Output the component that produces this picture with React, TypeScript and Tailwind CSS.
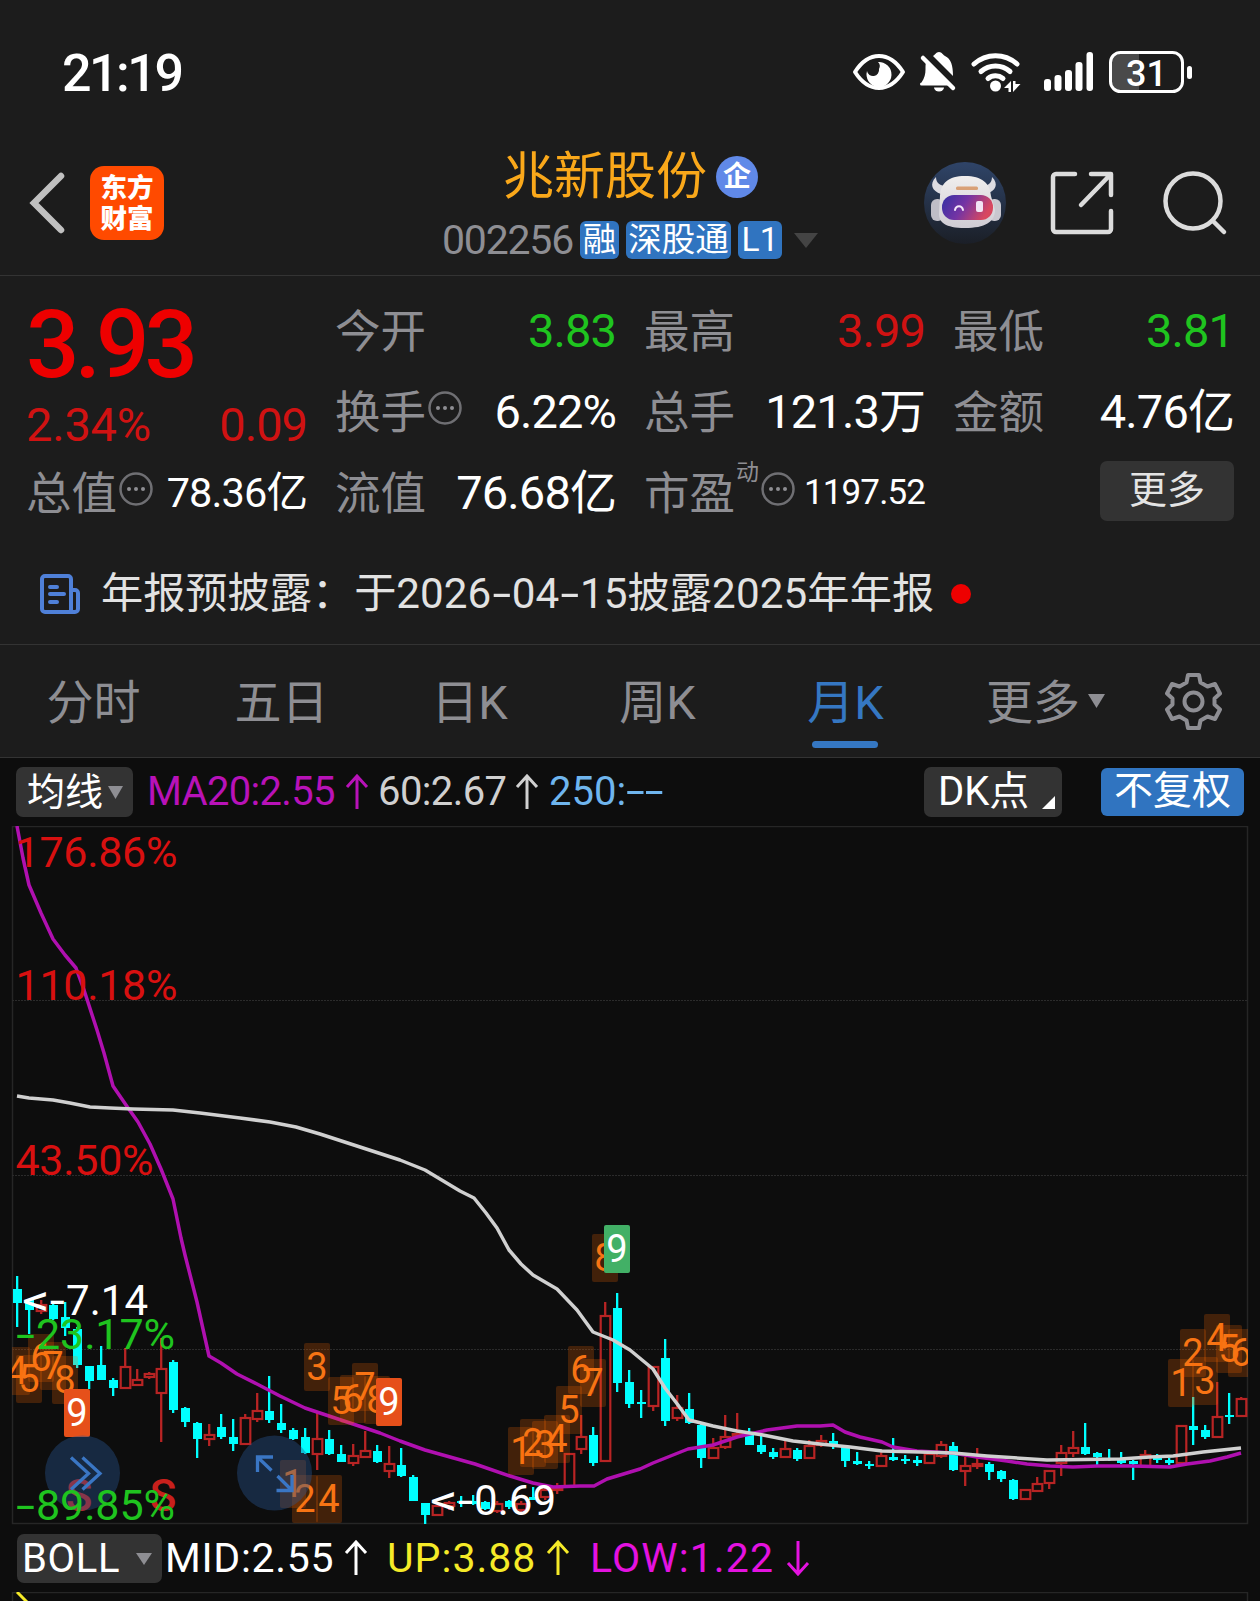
import { clsx } from "clsx";

type Candle = ["u" | "d", number, number, number, number];

// direction, high, body top, body bottom, low
const candles: Candle[] = [
  ["d", 1276, 1289, 1303, 1327],
  ["d", 1300, 1300, 1310, 1334],
  ["u", 1300, 1304, 1312, 1314],
  ["d", 1303, 1305, 1319, 1320],
  ["d", 1302, 1317, 1328, 1336],
  ["d", 1327, 1329, 1365, 1368],
  ["d", 1366, 1366, 1381, 1389],
  ["d", 1346, 1365, 1380, 1380],
  ["d", 1378, 1380, 1388, 1396],
  ["u", 1348, 1366, 1389, 1389],
  ["u", 1369, 1379, 1386, 1386],
  ["u", 1372, 1373, 1378, 1379],
  ["u", 1338, 1368, 1394, 1442],
  ["d", 1360, 1362, 1410, 1413],
  ["d", 1407, 1408, 1422, 1427],
  ["d", 1422, 1423, 1439, 1458],
  ["u", 1424, 1434, 1440, 1446],
  ["d", 1414, 1427, 1437, 1439],
  ["d", 1419, 1437, 1444, 1451],
  ["u", 1414, 1417, 1445, 1445],
  ["u", 1393, 1410, 1420, 1422],
  ["d", 1376, 1411, 1420, 1423],
  ["d", 1404, 1423, 1430, 1433],
  ["d", 1428, 1430, 1439, 1440],
  ["d", 1428, 1437, 1453, 1454],
  ["u", 1413, 1438, 1455, 1470],
  ["d", 1430, 1439, 1454, 1455],
  ["d", 1445, 1454, 1462, 1462],
  ["u", 1444, 1455, 1464, 1466],
  ["u", 1431, 1450, 1458, 1458],
  ["d", 1445, 1451, 1462, 1463],
  ["u", 1446, 1463, 1472, 1478],
  ["d", 1448, 1465, 1476, 1477],
  ["d", 1475, 1477, 1501, 1501],
  ["d", 1503, 1503, 1515, 1524],
  ["u", 1505, 1505, 1516, 1516],
  ["u", 1501, 1502, 1507, 1510],
  ["d", 1496, 1501, 1503, 1507],
  ["d", 1495, 1501, 1504, 1505],
  ["d", 1501, 1502, 1509, 1510],
  ["u", 1501, 1503, 1512, 1513],
  ["d", 1500, 1501, 1507, 1509],
  ["u", 1501, 1503, 1511, 1513],
  ["d", 1487, 1497, 1500, 1500],
  ["u", 1487, 1489, 1498, 1500],
  ["u", 1483, 1487, 1491, 1494],
  ["u", 1453, 1453, 1487, 1487],
  ["u", 1415, 1436, 1450, 1454],
  ["d", 1427, 1435, 1463, 1466],
  ["u", 1302, 1315, 1462, 1462],
  ["d", 1293, 1308, 1383, 1392],
  ["d", 1370, 1382, 1404, 1408],
  ["d", 1390, 1402, 1404, 1418],
  ["u", 1366, 1366, 1407, 1411],
  ["d", 1339, 1358, 1421, 1426],
  ["u", 1395, 1407, 1419, 1421],
  ["d", 1393, 1409, 1423, 1424],
  ["d", 1424, 1425, 1458, 1468],
  ["u", 1438, 1447, 1459, 1459],
  ["u", 1415, 1436, 1448, 1449],
  ["u", 1413, 1433, 1437, 1438],
  ["d", 1428, 1435, 1445, 1445],
  ["d", 1433, 1445, 1452, 1454],
  ["d", 1448, 1452, 1457, 1459],
  ["u", 1438, 1448, 1458, 1458],
  ["d", 1448, 1450, 1459, 1461],
  ["u", 1440, 1445, 1459, 1459],
  ["u", 1435, 1440, 1446, 1447],
  ["d", 1433, 1441, 1445, 1449],
  ["d", 1447, 1447, 1461, 1467],
  ["d", 1452, 1461, 1464, 1465],
  ["d", 1461, 1464, 1466, 1469],
  ["u", 1452, 1455, 1467, 1467],
  ["d", 1438, 1457, 1460, 1461],
  ["d", 1455, 1459, 1461, 1464],
  ["d", 1456, 1460, 1463, 1466],
  ["u", 1453, 1453, 1464, 1464],
  ["u", 1441, 1444, 1457, 1458],
  ["d", 1442, 1446, 1470, 1471],
  ["u", 1457, 1465, 1472, 1486],
  ["u", 1448, 1463, 1467, 1469],
  ["d", 1462, 1464, 1472, 1480],
  ["d", 1470, 1471, 1479, 1482],
  ["d", 1479, 1480, 1499, 1500],
  ["u", 1489, 1489, 1500, 1500],
  ["u", 1477, 1483, 1492, 1492],
  ["u", 1470, 1470, 1484, 1489],
  ["u", 1445, 1452, 1464, 1476],
  ["u", 1431, 1447, 1454, 1457],
  ["d", 1423, 1447, 1454, 1455],
  ["d", 1452, 1453, 1457, 1467],
  ["d", 1449, 1458, 1460, 1461],
  ["d", 1452, 1460, 1463, 1464],
  ["d", 1460, 1461, 1464, 1480],
  ["u", 1450, 1454, 1467, 1467],
  ["d", 1454, 1458, 1460, 1463],
  ["d", 1458, 1460, 1463, 1465],
  ["u", 1425, 1425, 1464, 1464],
  ["d", 1397, 1426, 1430, 1445],
  ["d", 1425, 1430, 1437, 1439],
  ["u", 1382, 1416, 1438, 1438],
  ["d", 1393, 1415, 1417, 1424],
  ["u", 1397, 1398, 1417, 1417],
];

const ma20 =
  "17,826 23,858 29,885 41,913 53,939 65,955 76,968 84,990 97,1030 104,1053 113,1086 126,1105 138,1122 150,1144 161,1169 173,1199 181,1238 185,1255 197,1302 209,1356 221,1363 237,1374 257,1384 280,1396 305,1408 323,1414 353,1424 380,1433 400,1441 425,1450 475,1464 510,1476 533,1483 553,1487 580,1486 594,1486 607,1479 640,1469 653,1463 688,1449 713,1445 737,1437 767,1430 797,1426 820,1426 833,1425 845,1432 860,1437 882,1442 893,1447 917,1451 953,1453 977,1457 1007,1461 1027,1464 1050,1466 1073,1467 1097,1466 1133,1466 1170,1467 1187,1464 1210,1461 1227,1457 1241,1453";

const ma60 =
  "17,1096 29,1098 53,1100 70,1103 90,1107 110,1108 133,1109 173,1110 200,1113 240,1118 270,1122 296,1127 320,1134 360,1147 400,1160 425,1170 440,1179 460,1191 474,1198 486,1213 497,1228 509,1250 521,1264 533,1275 557,1289 577,1310 593,1332 613,1340 630,1350 653,1369 665,1388 678,1405 689,1420 713,1426 737,1431 763,1435 793,1441 820,1444 850,1447 882,1451 920,1452 953,1453 987,1456 1047,1460 1120,1459 1150,1457 1173,1456 1203,1452 1241,1448";

// sequence counters: digit, centre x, top y
const counters: [string, number, number][] = [
  ["4", 17, 1347],
  ["5", 29, 1355],
  ["6", 41, 1334],
  ["7", 53, 1342],
  ["8", 65, 1356],
  ["3", 317, 1343],
  ["5", 341, 1377],
  ["6", 353, 1375],
  ["7", 365, 1363],
  ["8", 377, 1376],
  ["1", 293, 1460],
  ["2", 305, 1475],
  ["4", 329, 1475],
  ["1", 521, 1427],
  ["2", 533, 1419],
  ["3", 545, 1421],
  ["4", 557, 1415],
  ["5", 569, 1386],
  ["6", 581, 1346],
  ["7", 593, 1359],
  ["8", 605, 1234],
  ["1", 1181, 1359],
  ["2", 1193, 1329],
  ["3", 1205, 1357],
  ["4", 1217, 1314],
  ["5", 1229, 1325],
  ["6", 1241, 1329],
];

const nines: [number, number, string][] = [
  [77, 1389, "#e6501a"],
  [389, 1378, "#e6501a"],
  [617, 1225, "#42b066"],
];

const axis: [string, number, number, string][] = [
  ["176.86%", 867, 162, "#d81010"],
  ["110.18%", 1000, 162, "#d81010"],
  ["43.50%", 1175, 138, "#d81010"],
];

const axisDown: [string, number][] = [
  ["23.17%", 1349],
  ["89.85%", 1520],
];

function StatusBar() {
  return (
    <div className="flex h-[144px] items-center justify-between pl-[62px] pr-[67px]">
      <span className="pt-[4px] text-[52px] font-medium leading-none tracking-[-2.500px] text-white">21:19</span>
      <svg width="342" height="44" viewBox="851 50 342 44" fill="none">
        {/* eye */}
        <path d="M855 72C862 61 870 56 879 56s17 5 24 16c-7 11-15 16-24 16s-17-5-24-16Z" stroke="#fff" strokeWidth="4" strokeLinejoin="round" />
        <path d="M878 62a12.500 12.500 0 1 1-11 9a6 6 0 0 0 12-2a6 6 0 0 0-1-7Z" fill="#fff" />
        {/* muted bell */}
        <path d="M926 62 951 85.500H921.500a1.500 1.500 0 0 1 0-3c3-4 4-9 4-13 0-3 0-5 .500-7.500Z" fill="#fff" />
        <path d="M933 56c2-1 3-4 6-4s4 3 6 4c6 3 8 9 8 20Z" fill="#fff" />
        <path d="m923 58 30 30" stroke="#fff" strokeWidth="4.500" strokeLinecap="round" />
        <path d="M934 87.500h10a5 4 0 0 1-10 0Z" fill="#fff" />
        {/* wifi */}
        <g stroke="#fff" strokeWidth="5" strokeLinecap="round">
          <path d="M974 64a32 32 0 0 1 43 0" />
          <path d="M981 71.500a22 22 0 0 1 29 0" />
          <path d="M988 78.500a12 12 0 0 1 15 0" />
        </g>
        <circle cx="995.500" cy="86" r="5.500" fill="#fff" />
        <path d="M1011 81v11h-2.500v-4H1004ZM1013 92V81h2.500v3h5Z" fill="#fff" />
        {/* signal */}
        <g fill="#fff">
          <rect x="1044" y="79" width="7" height="12" rx="3" />
          <rect x="1054.500" y="75" width="7" height="16" rx="3" />
          <rect x="1065" y="70" width="7" height="21" rx="3" />
          <rect x="1075.500" y="62" width="7" height="29" rx="3" />
          <rect x="1086.500" y="52" width="6.500" height="39" rx="3" />
        </g>
        {/* battery */}
        <path d="M1119 54h20v36h-20a8 8 0 0 1-8-8V62a8 8 0 0 1 8-8Z" fill="#4a4a4a" />
        <rect x="1110.500" y="52.500" width="72" height="39" rx="10" stroke="#fff" strokeWidth="3" />
        <rect x="1187" y="66" width="5" height="13" rx="2.500" fill="#fff" />
        <text x="1126" y="85.500" fill="#fff" className="text-[36px] font-medium">31</text>
      </svg>
    </div>
  );
}

function Robot() {
  return (
    <svg width="82" height="82" viewBox="0 0 82 82">
      <defs>
        <linearGradient id="halo" x1="0" y1="0" x2="0" y2="1">
          <stop offset="0" stopColor="#2f4468" />
          <stop offset="1" stopColor="#1b1f27" />
        </linearGradient>
        <linearGradient id="visor" x1="0" y1="0" x2="1" y2="0.300">
          <stop offset="0" stopColor="#3430a4" />
          <stop offset="0.500" stopColor="#7434a4" />
          <stop offset="1" stopColor="#d84860" />
        </linearGradient>
        <linearGradient id="helmet" x1="0" y1="0" x2="0" y2="1">
          <stop offset="0" stopColor="#f0eeee" />
          <stop offset="1" stopColor="#cfccd4" />
        </linearGradient>
      </defs>
      <circle cx="41" cy="41" r="41" fill="url(#halo)" />
      <path d="M17 32C8 29 5 22 12 15c0 6 4 9 11 9ZM62 32c10-3 13-10 6-17 0 6-4 9-10 9Z" fill="#dddce2" />
      <rect x="7" y="37" width="13" height="22" rx="6" fill="#bfbdc6" />
      <rect x="64" y="37" width="13" height="22" rx="6" fill="#c9c7cf" />
      <path d="M16 34c1-13 8-20 25-20s25 7 26 20l4 14c0 12-10 18-30 18S15 60 15 52Z" fill="url(#helmet)" />
      <rect x="32" y="24.500" width="22" height="3.500" rx="1.500" fill="#d9a077" />
      <rect x="18" y="33" width="51" height="25" rx="12" fill="url(#visor)" />
      <path d="M31 48c1-5 7-5 8 0" stroke="#f4e6fa" strokeWidth="2" fill="none" strokeLinecap="round" />
      <rect x="52" y="39" width="7" height="11" rx="2" fill="#f2e4f4" />
    </svg>
  );
}

function Tag({ children, className }: { children: string; className?: string }) {
  return (
    <span className={clsx("flex h-[38px] items-center justify-center rounded-[6px] bg-[#3074c0] pb-[1px] text-[33.500px] leading-none text-white", className)}>
      {children}
    </span>
  );
}

function Header() {
  return (
    <header className="flex h-[132px] items-center border-b border-[#333333] pl-[28px] pr-[32px] pb-[10px]">
      <div className="flex w-[400px] items-center pb-[3px]">
        <svg width="38" height="62" viewBox="0 0 38 62" fill="none">
          <path d="M33 4 6 31l27 27" stroke="#c0c0c0" strokeWidth="6.500" strokeLinecap="round" />
        </svg>
        <div className="ml-[24px] flex h-[74px] w-[74px] flex-col items-center justify-center rounded-[14px] bg-[#ff4a00] pb-[1px] text-[26.500px] font-black leading-[31px] text-white">
          <span>东方</span>
          <span>财富</span>
        </div>
      </div>
      <div className="flex w-[404px] flex-col items-center">
        <div className="flex items-center gap-[9px] pl-[1px]">
          <h1 className="text-[51px] leading-[56px] text-[#faa81a]">兆新股份</h1>
          <span className="flex h-[42px] w-[42px] items-center justify-center rounded-full bg-[#6089e8] text-[28px] font-bold leading-none text-white">
            企
          </span>
        </div>
        <div className="mt-[15px] flex items-center">
          <span className="text-[41px] leading-none tracking-[-1.200px] text-[#8e8e93]">002256</span>
          <Tag className="ml-[7px] w-[39px]">融</Tag>
          <Tag className="ml-[7px] w-[105px]">深股通</Tag>
          <Tag className="ml-[7px] w-[44px]">L1</Tag>
          <svg width="24" height="15" viewBox="0 0 24 15" className="ml-[12px]">
            <path d="M0 0h24L12 15Z" fill="#444444" />
          </svg>
        </div>
      </div>
      <div className="flex flex-1 items-center justify-end pb-[3px]">
        <Robot />
        <svg width="64" height="64" viewBox="0 0 64 64" fill="none" stroke="#dcdcdc" strokeWidth="4.500" strokeLinecap="round" strokeLinejoin="round" className="ml-[44px]">
          <path d="M25 3H6a3 3 0 0 0-3 3v52a3 3 0 0 0 3 3h52a3 3 0 0 0 3-3V40M41 3h20v21M60 4 31 34" />
        </svg>
        <svg width="66" height="66" viewBox="0 0 66 66" fill="none" stroke="#dcdcdc" strokeWidth="4.500" strokeLinecap="round" className="ml-[48px]">
          <circle cx="31" cy="31" r="27.500" />
          <path d="m51 51 11 11" />
        </svg>
      </div>
    </header>
  );
}

function Info() {
  return (
    <svg width="34" height="34" viewBox="0 0 34 34" className="-mt-[11px] ml-[2px]">
      <circle cx="17" cy="17" r="15.500" fill="none" stroke="#6f6f73" strokeWidth="2.500" />
      <circle cx="10" cy="17" r="2" fill="#8e8e93" />
      <circle cx="17" cy="17" r="2" fill="#8e8e93" />
      <circle cx="24" cy="17" r="2" fill="#8e8e93" />
    </svg>
  );
}

interface StatProps {
  label: string;
  value: string;
  tone?: string;
  size?: string;
  info?: boolean;
  sup?: string;
}

function Stat({ label, value, tone = "text-white", size = "text-[47px]", info, sup }: StatProps) {
  return (
    <div className="flex items-center justify-between whitespace-nowrap leading-none">
      <div className="flex items-center pt-[4px]">
        <span className="text-[45.500px] text-[#8e8e93]">{label}</span>
        {sup && <span className="-mt-[44px] ml-[1px] text-[23px] text-[#8e8e93]">{sup}</span>}
        {info && <Info />}
      </div>
      <span className={clsx("tracking-[-0.900px]", tone, size)}>{value}</span>
    </div>
  );
}

function Quote() {
  return (
    <section className="grid h-[257px] grid-cols-4 grid-rows-[81px_81px_81px] gap-x-[28px] pl-[26px] pr-[26px] pt-[14px]">
      <div className="row-span-2 flex flex-col leading-none">
        <div className="mt-[8px] text-[94px] font-medium tracking-[-4.800px] text-[#ee0000]">3.93</div>
        <div className="mt-[9px] flex justify-between text-[47px] text-[#d01212]">
          <span className="tracking-[-0.200px]">2.34%</span>
          <span className="tracking-[-1px]">0.09</span>
        </div>
      </div>
      <Stat label="今开" value="3.83" tone="text-[#1fc41f]" />
      <Stat label="最高" value="3.99" tone="text-[#d01212]" />
      <Stat label="最低" value="3.81" tone="text-[#1fc41f]" />
      <Stat label="换手" value="6.22%" info />
      <Stat label="总手" value="121.3万" />
      <Stat label="金额" value="4.76亿" />
      <Stat label="总值" value="78.36亿" size="text-[41.500px]" info />
      <Stat label="流值" value="76.68亿" />
      <Stat label="市盈" value="1197.52" size="text-[35px]" sup="动" info />
      <button className="mt-[9px] h-[60px] w-[134px] justify-self-end rounded-[7px] bg-[#333333] pb-[2px] text-[38px] leading-none text-[#e4e4e4]">
        更多
      </button>
    </section>
  );
}

function Notice() {
  return (
    <div className="flex h-[112px] items-center border-b border-[#333333] pl-[39px] pt-[11px] text-[#e2e2e2]">
      <svg width="42" height="42" viewBox="0 0 42 42" fill="none" stroke="#4f80d8" strokeWidth="4" strokeLinejoin="round" strokeLinecap="round">
        <path d="M32 39H6a3 3 0 0 1-3-3V6a3 3 0 0 1 3-3h23a3 3 0 0 1 3 3v33ZM32 17h4a3 3 0 0 1 3 3v16a3 3 0 0 1-3 3h-4M11 14h7M11 21h14M11 29h7" />
      </svg>
      <div className="ml-[20px] flex pt-[1px] text-[42.200px] leading-none">
        <span>年报预披露：</span>
        <span>于2026</span>
        <span className="mx-[4.500px] scale-x-[1.600]">-</span>
        <span>04</span>
        <span className="mx-[4.500px] scale-x-[1.600]">-</span>
        <span className="tracking-[0.100px]">15披露2025年年报</span>
      </div>
      <span className="ml-[17px] h-[20px] w-[20px] rounded-full bg-[#ee0000]" />
    </div>
  );
}

const tabs = ["分时", "五日", "日K", "周K", "月K"];

function Tabs() {
  return (
    <nav className="flex h-[113px] items-center border-b border-[#333333] text-[47px] leading-none text-[#8e8e93]">
      {tabs.map((tab) => {
        const active = tab === "月K";
        return (
          <div key={tab} className={clsx("relative flex h-full w-[188px] items-center justify-center pt-[2px] pr-[1px]", active && "text-[#3577c2]")}>
            {tab}
            {active && <span className="absolute bottom-[9px] left-[60px] h-[7px] w-[66px] rounded-full bg-[#3577c2]" />}
          </div>
        );
      })}
      <div className="ml-[46px] flex items-center pt-[2px]">
        更多
        <svg width="17" height="14" viewBox="0 0 17 14" className="-mt-[2px] ml-[8px]">
          <path d="M0 0h17L8.500 14Z" fill="#8e8e93" />
        </svg>
      </div>
      <svg width="58" height="58" viewBox="0 0 58 58" fill="none" stroke="#8e8e93" strokeWidth="4" strokeLinejoin="round" className="ml-[59px]">
        <path d="M24 3h11l1.500 7.500 7 4 7.500-2.500 5 9.500-5.500 5v6l5.500 5-5 9.500-7.500-2.500-7 4L35 56H24l-1.500-7.500-7-4L8 47l-5-9.500 5.500-5v-6L3 21.500 8 12l7.500 2.500 7-4Z" />
        <circle cx="29.500" cy="29.500" r="9" />
      </svg>
    </nav>
  );
}

function Arrow({ down = false, className }: { down?: boolean; className?: string }) {
  return (
    <svg width="24" height="36" viewBox="0 0 24 36" fill="none" stroke="currentColor" strokeWidth="3" className={clsx("shrink-0", down && "rotate-180", className)}>
      <path d="M12 35V3M2 13 12 2l10 11" />
    </svg>
  );
}

function MaBar() {
  return (
    <div className="flex h-[68px] items-center whitespace-nowrap pl-[16px] pr-[16px] text-[40px] leading-none">
      <div className="flex h-[50px] w-[117px] items-center rounded-[7px] bg-[#333333] pl-[11px] text-[38px] text-white">
        均线
        <svg width="15" height="13" viewBox="0 0 15 13" className="ml-[5px]">
          <path d="M0 0h15L7.500 13Z" fill="#8e8e93" />
        </svg>
      </div>
      <div className="ml-[14px] flex w-[231px] items-center tracking-[-0.700px] text-[#b812b8]">
        MA20:2.55
        <Arrow className="ml-auto mr-[9px]" />
      </div>
      <div className="flex w-[171px] items-center tracking-[-0.600px] text-[#d0d0d0]">
        60:2.67
        <Arrow className="ml-auto mr-[10px]" />
      </div>
      <div className="flex text-[#6fb5ee]">
        250:
        <span className="origin-left scale-x-[1.700]">--</span>
      </div>
      <div className="relative ml-auto flex h-[50px] w-[138px] items-center rounded-[7px] bg-[#333333] pl-[14px] text-[40px] text-white">
        DK点
        <svg width="13" height="13" viewBox="0 0 13 13" className="absolute bottom-[8px] right-[7px]">
          <path d="M13 0v13H0Z" fill="#fff" />
        </svg>
      </div>
      <div className="ml-[39px] flex h-[48px] w-[143px] items-center justify-center rounded-[6px] bg-[#3074c0] pb-[1px] text-[39px] text-white">
        不复权
      </div>
    </div>
  );
}

function KChart() {
  return (
    <svg width="1260" height="700" viewBox="0 826 1260 700" className="block">
      <defs>
        <clipPath id="plot">
          <rect x="12" y="826" width="1236" height="700" />
        </clipPath>
      </defs>
      <rect x="12.500" y="826.500" width="1235" height="697" fill="none" stroke="#262626" strokeWidth="1.500" />
      {[1000.5, 1175.5, 1349.5].map((y) => (
        <line key={y} x1="12" x2="1248" y1={y} y2={y} stroke="#2b2b2b" strokeDasharray="2 1" />
      ))}

      <g fill="#c8201c" className="text-[44px] font-medium" textAnchor="middle">
        <text x="79" y="1511">S</text>
        <text x="163" y="1511">S</text>
      </g>

      {candles.map(([dir, high, top, bottom, low], i) => {
        const x = 17 + i * 12;
        if (dir === "d") {
          return (
            <g key={i} fill="#00ffff">
              <rect x={x - 1} y={high} width="2.300" height={low - high} />
              <rect x={x - 4} y={top} width="9" height={bottom - top} />
            </g>
          );
        }
        return (
          <g key={i}>
            <path d={`M${x + 0.2} ${high}V${top}M${x + 0.2} ${bottom}V${low}`} stroke="#b82424" strokeWidth="2.300" />
            <rect x={x - 4.3} y={top + 1} width="9.600" height={bottom - top - 2} fill="none" stroke="#b82424" strokeWidth="2.200" />
          </g>
        );
      })}

      <g clipPath="url(#plot)" fill="none" strokeLinejoin="round">
        <polyline points={ma20} stroke="#b010b0" strokeWidth="3.500" />
        <polyline points={ma60} stroke="#d0d0d0" strokeWidth="3.500" />
      </g>

      <g clipPath="url(#plot)" textAnchor="middle" className="text-[38px]">
        {counters.map(([digit, x, y]) => (
          <g key={`${digit}-${x}`}>
            <rect x={x - 13} y={y} width="26" height="48" rx="2" fill="#ff6a00" fillOpacity="0.220" />
            <text x={x} y={y + 37} fill="#f87414">{digit}</text>
          </g>
        ))}
        {nines.map(([x, y, fill]) => (
          <g key={x}>
            <rect x={x - 13} y={y} width="26" height="48" rx="2" fill={fill} />
            <text x={x} y={y + 37} fill="#fff">9</text>
          </g>
        ))}
      </g>

      {/* floating round buttons */}
      <g fill="#285591" fillOpacity="0.400">
        <circle cx="82.500" cy="1473" r="37.500" />
        <circle cx="274.500" cy="1473" r="37.500" />
      </g>
      <g fill="none" stroke="#3a76c4" strokeWidth="3.300">
        <path d="M71 1457.500 88.500 1473.500 71 1489.500M82.500 1457.500 100 1473.500 82.500 1489.500" />
        <path d="M257.500 1472v-15h15.500M258 1457.500l13.500 13M292 1475v15.500h-15.500M291.500 1490l-14-14" />
      </g>

      <g className="text-[43px]">
        {axis.map(([label, y, width, fill]) => (
          <text key={label} x="15.500" y={y} fill={fill} textLength={width}>{label}</text>
        ))}
        {axisDown.map(([label, y]) => (
          <text key={label} y={y} fill="#1fc41f">
            <tspan x="16" textLength="19" lengthAdjust="spacingAndGlyphs">-</tspan>
            <tspan x="36" textLength="139">{label}</tspan>
          </text>
        ))}
      </g>
      <g fill="#fff" className="text-[42px]">
        <text y="1315">
          <tspan x="22" textLength="43" lengthAdjust="spacingAndGlyphs">&lt;-</tspan>
          <tspan x="66" textLength="82">7.14</tspan>
        </text>
        <text y="1515">
          <tspan x="430" textLength="43" lengthAdjust="spacingAndGlyphs">&lt;-</tspan>
          <tspan x="474" textLength="82">0.69</tspan>
        </text>
      </g>
    </svg>
  );
}

function BollBar() {
  return (
    <div className="flex h-[66px] items-center whitespace-nowrap pl-[17px] text-[41px] leading-none tracking-[0.700px]">
      <div className="-mt-[1px] flex h-[49px] w-[145px] items-center rounded-[7px] bg-[#333333] pl-[5px] text-[40px] text-white">
        BOLL
        <svg width="16" height="12" viewBox="0 0 16 12" className="ml-auto mr-[10px]">
          <path d="M0 0h16L8 12Z" fill="#8e8e93" />
        </svg>
      </div>
      <div className="-mt-[2px] ml-[3px] flex w-[222px] items-center text-white">
        MID:2.55
        <Arrow className="ml-auto mr-[19px]" />
      </div>
      <div className="-mt-[2px] flex w-[203px] items-center tracking-[1px] text-[#f5ea28]">
        UP:3.88
        <Arrow className="ml-auto mr-[20px]" />
      </div>
      <div className="-mt-[2px] flex w-[220px] items-center tracking-[1.100px] text-[#e412e0]">
        LOW:1.22
        <Arrow down className="ml-auto" />
      </div>
    </div>
  );
}

export default function App() {
  return (
    <div className="h-[1601px] w-[1260px] overflow-hidden bg-[#0d0d0d] font-[Roboto,'Noto_Sans_CJK_SC',sans-serif]">
      <div className="bg-[#1c1c1c]">
        <StatusBar />
        <Header />
        <Quote />
        <Notice />
        <Tabs />
      </div>
      <MaBar />
      <KChart />
      <BollBar />
      <svg width="1260" height="9" viewBox="0 0 1260 9" className="block">
        <path d="M12.500 9V.500h1235V9" fill="none" stroke="#262626" strokeWidth="1.500" />
        <path d="m17 0 10 10" stroke="#f5ea28" strokeWidth="3" />
      </svg>
    </div>
  );
}
